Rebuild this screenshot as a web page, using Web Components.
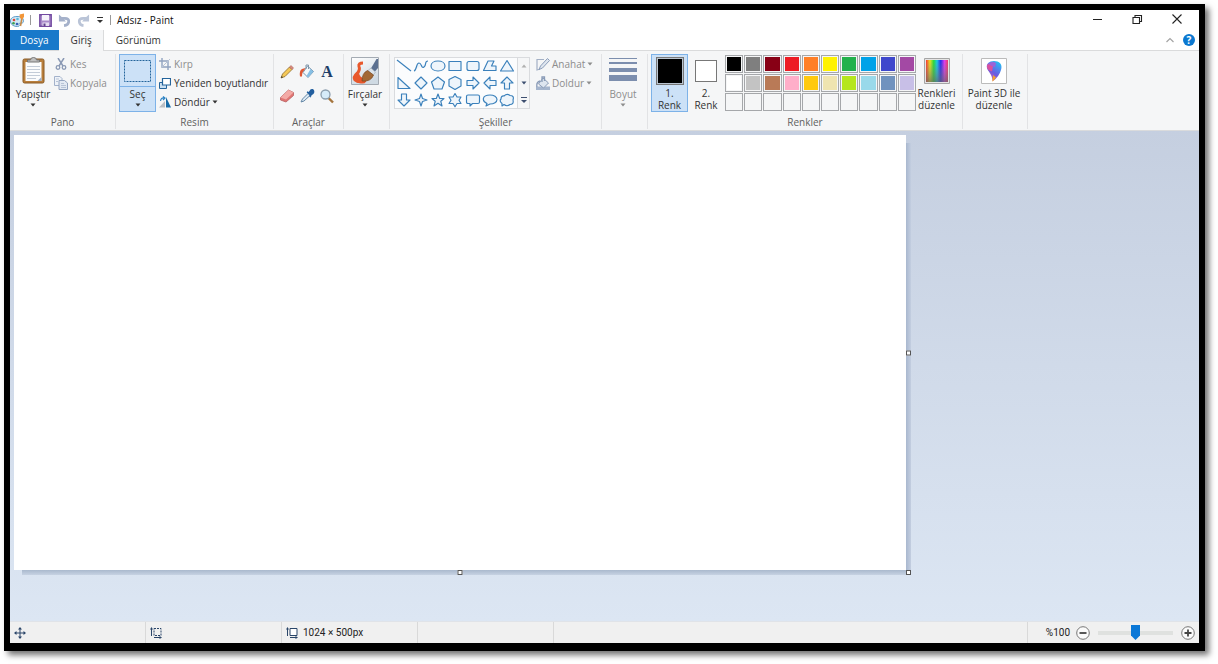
<!DOCTYPE html>
<html lang="tr">
<head>
<meta charset="utf-8">
<title>Adsız - Paint</title>
<style>
  body { margin: 0; background: #fff; }
</style>
</head>
<body>
<paint-window></paint-window>

<script>
const shape = (d) => `<svg viewBox="0 0 16 16"><path d="${d}" fill="#eef5fb" stroke="#3a80bb" stroke-width="1.15" stroke-linejoin="round"/></svg>`;
const shapes = {
  'Çizgi': 'M1 2 15 13',
  'Eğri': 'M1 13C4 12 3 5 6 5S8 11 11 9 11 3 15 3',
  'Oval': 'M8 3C12 3 15 5 15 8S12 13 8 13 1 11 1 8 4 3 8 3Z',
  'Dikdörtgen': 'M2 3.500H14V12.500H2Z',
  'Yuvarlatılmış dikdörtgen': 'M4 3.500H12Q14 3.500 14 5.500V10.500Q14 12.500 12 12.500H4Q2 12.500 2 10.500V5.500Q2 3.500 4 3.500Z',
  'Çokgen': 'M6 3H12L9.500 8H14V12.500H1.500Z',
  'Üçgen': 'M8 2.500 14.500 13H1.500Z',
  'Dik üçgen': 'M2 2.500V13.500H14Z',
  'Elmas': 'M8 2 14 8 8 14 2 8Z',
  'Beşgen': 'M8 2 14.500 7 12 14H4L1.500 7Z',
  'Altıgen': 'M8 1.500 14 4.500V11L8 14.500 2 11V4.500Z',
  'Sağ ok': 'M2 5.500H8V2L14 8 8 14V10.500H2Z',
  'Sol ok': 'M14 5.500H8V2L2 8 8 14V10.500H14Z',
  'Yukarı ok': 'M5.500 14V8H2L8 2 14 8H10.500V14Z',
  'Aşağı ok': 'M5.500 2V8H2L8 14 14 8H10.500V2Z',
  'Dört köşeli yıldız': 'M8 2 9.500 6.500 14 8 9.500 9.500 8 14 6.500 9.500 2 8 6.500 6.500Z',
  'Beş köşeli yıldız': 'M8 2 9.700 6.500H14L10.800 9.300 12 14 8 11.300 4 14 5.200 9.300 2 6.500H6.300Z',
  'Altı köşeli yıldız': 'M8 1.500 10 5H14L12 8.200 14 11.500H10L8 14.800 6 11.500H2L4 8.200 2 5H6Z',
  'Dikdörtgen belirtme': 'M3 3H13Q14.500 3 14.500 4.500V10Q14.500 11.500 13 11.500H7.500L5 14V11.500H3Q1.500 11.500 1.500 10V4.500Q1.500 3 3 3Z',
  'Oval belirtme': 'M8 3C12 3 15 5 15 7.500S12 12 8 12L4 14 5 11.500C-.5 9 0 3 8 3Z',
  'Bulut belirtme': 'M5 4Q8 1 11 3.500 15.500 3.500 14 8 15 12.500 11 12.500 8 15 5 12.500L3 14 3 11.500Q0 9 2 7 2 3.500 5 4Z'
};

const icons = {
  logo: `<svg viewBox="0 0 15 15"><path d="M7 3.500C2 3.500 0 6 .500 9S4 13.500 7.500 13.500 8 11 9 10.500 14 11 13.500 7.500 10 3.500 7 3.500Z" fill="#d2e8f6" stroke="#5c9cca"/><circle cx="4" cy="7" r="1.300" fill="#d64a37"/><circle cx="3.500" cy="10.300" r="1.300" fill="#3c9f52"/><circle cx="7" cy="11" r="1.300" fill="#365fb5"/><circle cx="7.500" cy="6" r="1.300" fill="#58b8da"/><path d="M12 5 10.500 13" stroke="#c78a48" stroke-width="1.500"/><path d="M9.500 1.500 14 .500V4L12 6.500 10 5Z" fill="#f29638"/></svg>`,
  save: `<svg viewBox="0 0 13 13"><path d="M.8.800H12.200V12.200H.8Z" fill="#a98bc9" stroke="#7249a0" stroke-width="1.400"/><path d="M3 1H10V6.500H3Z" fill="#f6f2fb"/><path d="M3.500 8.500H10V12H3.500Z" fill="#e6dcf0"/><path d="M4.500 9.500H6.500V12H4.500Z" fill="#60418c"/></svg>`,
  undo: `<svg viewBox="0 0 14 14"><path d="M3 4.800H7.500Q12 4.800 11.500 8.500 11 12 6.500 12.500" fill="none" stroke="#a5b1ca" stroke-width="3"/><path d="M1 .5V8H8.500L5.500 4.500Z" fill="#a5b1ca"/></svg>`,
  redo: `<svg viewBox="0 0 14 14"><path d="M11 4.800H6.500Q2 4.800 2.500 8.500 3 12 7 12.500" fill="none" stroke="#bac4d7" stroke-width="3"/><path d="M13 .5V8H5.500L8.500 4.500Z" fill="#bac4d7"/></svg>`,
  custom: `<svg viewBox="0 0 8 8"><path d="M1 1.500H7" stroke="#333"/><path d="M1 4H7L4 7Z" fill="#333"/></svg>`,
  minimize: `<svg viewBox="0 0 12 12"><path d="M2 5.500H11" stroke="#222"/></svg>`,
  restore: `<svg viewBox="0 0 12 12"><path d="M2 3.500H8.500V9.500H2ZM4 3.500V1.500H10.500V7.500H9" fill="none" stroke="#222" stroke-width="1.100"/></svg>`,
  close: `<svg viewBox="0 0 12 12"><path d="M1.500 .5 10.500 9.500M10.500 .5 1.500 9.500" stroke="#222" stroke-width="1.100"/></svg>`,
  chevron: `<svg viewBox="0 0 12 12"><path d="M2.500 8 6 4.500 9.500 8" fill="none" stroke="#a4a4a4" stroke-width="1.200"/></svg>`,
  paste: `<svg viewBox="0 0 24 30"><rect x="2" y="3" width="21" height="24" rx="1.500" fill="#b97f3c" stroke="#8a5b25"/><path d="M4.500 6H20.500V25H4.500Z" fill="#fbfcfd"/><path d="M6 10.500H19M6 13.500H19M6 16.500H19M6 19.500H19M6 22.500H15" stroke="#c3ccd8"/><path d="M16.500 25 20.500 21V25Z" fill="#9db0c8"/><path d="M6.500 6V4H9.500Q9.500 1.500 12.500 1.500T15.500 4H18.500V6Z" fill="#c0c0c0" stroke="#777"/></svg>`,
  cut: `<svg viewBox="0 0 12 12"><path d="M3 0 8 8M9 0 4 8" stroke="#8a99b4" stroke-width="1.500"/><circle cx="3" cy="9.500" r="1.800" fill="none" stroke="#8a99b4" stroke-width="1.300"/><circle cx="9" cy="9.500" r="1.800" fill="none" stroke="#8a99b4" stroke-width="1.300"/></svg>`,
  copy: `<svg viewBox="0 0 14 14"><path d="M.5.500H6L8 2.500V9.500H.5Z" fill="#eef2f8" stroke="#a3b2cb"/><path d="M5 4.500H10.500L13.500 7V13.500H5Z" fill="#e2e9f3" stroke="#94a5c1"/><path d="M2 3H5M2 5.500H4M7 7.500H10M7 9.500H12M7 11.500H12" stroke="#b7c3d6"/></svg>`,
  select: `<svg viewBox="0 0 27 22"><path d="M.5.500H26.500V21.500H.5Z" fill="none" stroke="#24649b" stroke-dasharray="2 1"/></svg>`,
  crop: `<svg viewBox="0 0 12 12"><path d="M3 0V9H12M0 3H9V12" fill="none" stroke="#91a3c0" stroke-width="1.400"/><path d="M2 10 11 1" stroke="#b8c3d5"/></svg>`,
  resize: `<svg viewBox="0 0 12 12"><path d="M3 5.500H.5V11.500H7.500V8" fill="#cbe0f2" stroke="#24649b"/><path d="M3.500 1.500H11.500V8H3.500Z" fill="#fff" stroke="#24649b" stroke-width="1.200"/></svg>`,
  rotate: `<svg viewBox="0 0 12 12"><path d="M7 1 12 11.500H7Z" fill="#176ba8"/><path d="M6 5V11.500H0Z" fill="#b9bec4"/><path d="M1.500 5Q2 1.500 5 2M4 .500 6 2 4 4" fill="none" stroke="#2d83c5" stroke-width="1.200"/></svg>`,
  pencil: `<svg viewBox="0 0 16 16"><path d="M2 14 3.500 10 10.500 3 13 5.500 6 12.500Z" fill="#f5c958" stroke="#8c6b2c" stroke-width=".8"/><path d="M10.500 3 12 1.500 14.500 4 13 5.500Z" fill="#dc8b7e" stroke="#a86055" stroke-width=".6"/><path d="M2 14 2.700 12 4 13.300Z" fill="#333"/></svg>`,
  bucket: `<svg viewBox="0 0 16 16"><path d="M8.500 2 14.500 7.500 9 13.500 4 8.500Z" fill="#f3f8fb" stroke="#7593ad"/><path d="M11.500 5 14.500 7.500 9 13.500 7.500 12Z" fill="#86bfe4"/><path d="M1 12.500Q0 6.500 3 5L6.500 4 5 6.500Q3 8 3 12.500Z" fill="#df5733"/><path d="M7 5V1H9.500V5" fill="none" stroke="#8096a9"/></svg>`,
  textmark: `<svg viewBox="0 0 16 16" overflow="visible"><text x="8" y="13" text-anchor="middle" font-family="Liberation Serif, serif" font-size="16" font-weight="700" fill="#1e3e68">A</text></svg>`,
  eraser: `<svg viewBox="0 0 16 16"><path d="M1.500 9.500 9.500 2 14.500 4.500V7.500L7 14 1.500 12Z" fill="#e07573" stroke="#b86061" stroke-width=".8"/><path d="M1.500 9.500 9.500 2 14.500 4.500 7 11.500Z" fill="#f3aaa6"/></svg>`,
  picker: `<svg viewBox="0 0 16 16"><path d="M2 14 3.500 11 9 5.500 11 7.500 5 13Z" fill="#dceaf5" stroke="#6487a6"/><path d="M8 4 10 5 12 2Q14 1 14.500 3T13 6L11 8 12 9" fill="#235f9f" stroke="#235f9f" stroke-width="1.500"/></svg>`,
  magnifier: `<svg viewBox="0 0 16 16"><path d="M9.500 10 14 14.500" stroke="#a5753e" stroke-width="2.400"/><circle cx="6.500" cy="6.500" r="4.500" fill="#d6ebf9" stroke="#8c9eae" stroke-width="1.300"/></svg>`,
  brush: `<svg viewBox="0 0 28 28"><defs><linearGradient id="b" y2="1" x2=".4"><stop stop-color="#fff"/><stop offset="1" stop-color="#cfdae3"/></linearGradient></defs><path d="M.5.500H27.500V27.500H.5Z" fill="url(#b)" stroke="#a4abb3"/><path d="M12 6Q7 6 8 9.500 9.500 13 6 16.500 2 20 4 23 7 26 14 24.500" fill="none" stroke="#e8582c" stroke-width="3"/><path d="M4 18Q2 26 9 26L15 25V21Q9 22 8 16Z" fill="#e8582c"/><path d="M19 13 25.500 2H27V11L22.500 16Z" fill="#5b7090"/><path d="M17 13.500 20 11 24.500 15 22 18.500Z" fill="#dce4eb" stroke="#9aa7b3" stroke-width=".6"/><path d="M11 24Q11 16 16.500 13.500L22.500 18Q20 25 11 24Z" fill="#a36935" stroke="#794820" stroke-width=".7"/></svg>`,
  outline: `<svg viewBox="0 0 14 14"><path d="M8 2.500H1V13L4 12" fill="none" stroke="#a3b0c5" stroke-width="1.200"/><path d="M3 12.500 4.500 9 11.500 1.500 13.500 3.500 6.500 11Z" fill="#dfe6ef" stroke="#8b9dba"/></svg>`,
  fill: `<svg viewBox="0 0 14 14"><path d="M0 10.500H14V14H0Z" fill="#a5b5cd"/><path d="M7 2 12.500 7 7.500 12 2.500 8Z" fill="#dde5ef" stroke="#899bb7"/><path d="M1 11Q0 6 4 5M6 6V1H8.500V5" fill="none" stroke="#899bb7" stroke-width="1.300"/></svg>`,
  size: `<svg viewBox="0 0 28 26"><path d="M0 0H28V1H0ZM0 4H28V6H0ZM0 10H28V14H0ZM0 17H28V23H0Z" fill="#7c8eae"/></svg>`,
  spectrum: `<svg viewBox="0 0 26 26"><defs><linearGradient id="h"><stop stop-color="#f33"/><stop offset=".18" stop-color="#e8e51f"/><stop offset=".35" stop-color="#24de38"/><stop offset=".5" stop-color="#17cbe8"/><stop offset=".67" stop-color="#2826f0"/><stop offset=".84" stop-color="#e13af0"/><stop offset="1" stop-color="#f13861"/></linearGradient><linearGradient id="v" x2="0" y2="1"><stop stop-color="#888" stop-opacity="0"/><stop offset="1" stop-color="#666" stop-opacity=".7"/></linearGradient></defs><path d="M.5.500H25.500V25.500H.5Z" fill="#e4e4e4" stroke="#a5a5a5"/><path d="M2 2H24V24H2Z" fill="url(#h)"/><path d="M2 2H24V24H2Z" fill="url(#v)"/></svg>`,
  paint3d: `<svg viewBox="0 0 26 26"><defs><linearGradient id="p" x1=".8" x2=".3" y2="1"><stop stop-color="#1fc4ee"/><stop offset=".3" stop-color="#4a8cf0"/><stop offset=".6" stop-color="#6a5ae0"/><stop offset=".8" stop-color="#a05fc8"/><stop offset="1" stop-color="#f2a32b"/></linearGradient></defs><path d="M.5.500H25.500V25.500H.5Z" fill="#fff" stroke="#bbb"/><path d="M13 3C8 3 5 6 6 10S11.500 16 11.500 23.500Q18 19 20 12C22 6 18 3 13 3Z" fill="url(#p)"/><path d="M6 7Q9 4 12 8.500L11 13.500 7.500 12Q5.500 10 6 7Z" fill="#d9519e"/><path d="M7 6Q11 2.500 15 5L14 9 11 8Z" fill="#9b63d8"/><path d="M12 17Q13.500 18 15 19.500L11.500 23.500Z" fill="#f5a32a"/></svg>`,
  move: `<svg viewBox="0 0 12 12"><path d="M6 1V11M1 6H11" stroke="#2a4568"/><path d="M6 0 8 2.500H4ZM6 12 4 9.500H8ZM0 6 2.500 4V8ZM12 6 9.500 8V4Z" fill="#2a4568"/></svg>`,
  selsize: `<svg viewBox="0 0 12 12"><path d="M4 1.500H11V8.500H4Z" fill="none" stroke="#2a4568" stroke-dasharray="2 1"/><path d="M1.500 1V9M4 10.500H11" stroke="#2a4568"/><path d="M1.500 0 3 2.500H0ZM12 10.500 9.500 9V12Z" fill="#2a4568"/></svg>`,
  imgsize: `<svg viewBox="0 0 12 12"><path d="M4 1.500H11V8.500H4Z" fill="#fff" stroke="#2a4568"/><path d="M1.500 1V9M4 10.500H11" stroke="#2a4568"/><path d="M1.500 0 3 2.500H0ZM12 10.500 9.500 9V12Z" fill="#2a4568"/></svg>`,
  minus: `<svg viewBox="0 0 14 14"><circle cx="7" cy="7" r="6.300" fill="#fafafa" stroke="#777"/><path d="M3.500 7H10.500" stroke="#444" stroke-width="1.800"/></svg>`,
  plus: `<svg viewBox="0 0 14 14"><circle cx="7" cy="7" r="6.300" fill="#fafafa" stroke="#777"/><path d="M3.500 7H10.500M7 3.500V10.500" stroke="#444" stroke-width="1.800"/></svg>`,
  up: `<svg viewBox="0 0 6 6"><path d="M.5 4.500H5.500L3 1.500Z" fill="#b0b0b0"/></svg>`,
  down: `<svg viewBox="0 0 6 6"><path d="M.5 1.500H5.500L3 4.500Z" fill="currentColor"/></svg>`,
  more: `<svg viewBox="0 0 8 8"><path d="M1 1.500H7" stroke="#3d4f70"/><path d="M1 4H7L4 7Z" fill="#3d4f70"/></svg>`
};

const BASE = `<style>
  *, *::before, *::after { box-sizing: border-box; }
  button { all: unset; box-sizing: border-box; cursor: default; }
  button:focus-visible { outline: 1px dotted #333; }
</style>`;

function define(name, html, setup) {
  const tpl = document.createElement('template');
  tpl.innerHTML = BASE + html;
  customElements.define(name, class extends HTMLElement {
    connectedCallback() {
      if (this.shadowRoot) return;
      const root = this.attachShadow({ mode: 'open' });
      root.append(tpl.content.cloneNode(true));
      if (setup) setup.call(this, root);
    }
  });
}

define('ui-icon', `<style>
  :host { display: block; flex: none; width: var(--w, 12px); height: var(--h, var(--w, 12px)); }
  svg { display: block; width: 100%; height: 100%; }
</style>`, function (root) {
  root.append(document.createRange().createContextualFragment(icons[this.getAttribute('name')]));
});

define('icon-button', `<style>
  :host { display: flex; }
  button { flex: 1; display: flex; align-items: center; justify-content: center; }
</style><button type="button"><slot></slot></button>`, function (root) {
  root.querySelector('button').setAttribute('aria-label', this.getAttribute('label'));
});

/* Large ribbon button: picture above, one or two caption lines, optional arrow */
define('big-button', `<style>
  :host { display: flex; flex: none; height: 58px; color: #333; }
  :host([muted]) { color: #8d8d8d; }
  button { flex: 1; display: flex; flex-direction: column; align-items: center; border: 1px solid transparent; text-align: center; }
  :host([active]) button { background: #cce1f7; border-color: #7db2e8; }
  .pic { height: 32px; align-self: stretch; display: flex; align-items: center; justify-content: center; }
  :host([split]) .pic { border-bottom: 1px solid #7db2e8; }
  .cap { line-height: 12px; padding-top: 1px; white-space: nowrap; }
  .arrow { display: none; padding-top: 2px; --w: 6px; }
  :host([menu]) .arrow { display: block; }
</style><button type="button"><span class="pic"><slot name="icon"></slot></span><span class="cap"><slot></slot></span><span class="arrow"><ui-icon name="down"></ui-icon></span></button>`,
function (root) { root.querySelector('button').disabled = this.hasAttribute('muted'); });

define('small-button', `<style>
  :host { display: flex; color: #333; }
  :host([muted]) { color: #8d8d8d; }
  button { display: flex; align-items: center; height: 19px; white-space: nowrap; }
  .pic { width: 14px; display: flex; justify-content: center; margin-right: 2px; }
  .arrow { display: none; --w: 6px; margin-left: 2px; }
  :host([menu]) .arrow { display: block; }
</style><button type="button"><span class="pic"></span><slot></slot><span class="arrow"><ui-icon name="down"></ui-icon></span></button>`,
function (root) {
  root.querySelector('button').disabled = this.hasAttribute('muted');
  const icon = document.createElement('ui-icon');
  icon.setAttribute('name', this.getAttribute('icon'));
  root.querySelector('.pic').append(icon);
});

define('ribbon-group', `<style>
  :host { display: flex; flex-direction: column; flex: none; border-right: 1px solid #e2e3e5; margin: 3px 0 1px; }
  .body { flex: 1; display: flex; align-items: flex-start; }
  .label { height: 14px; line-height: 14px; text-align: center; color: #5f5f5f; }
</style><div class="body"><slot></slot></div><div class="label"></div>`, function (root) {
  root.querySelector('.label').textContent = this.getAttribute('label') || '';
});

define('shape-gallery', `<style>
  :host { display: flex; width: 136px; height: 52px; border: 1px solid #d9dbde; background: #fbfcfd; }
  .grid { flex: 1; display: grid; grid-template-columns: repeat(7, 1fr); grid-template-rows: repeat(3, 1fr); margin-right: 1px; }
  .grid button { display: flex; align-items: center; justify-content: center; min-height: 0; }
  .grid svg { width: 16px; height: 16px; display: block; }
  .scroll { width: 12px; border-left: 1px solid #d9dbde; display: flex; flex-direction: column; background: #f5f6f7; color: #3d4f70; }
  icon-button { flex: 1; --w: 6px; }
  icon-button:last-child { --w: 8px; }
</style><div class="grid"></div><div class="scroll"><icon-button label="Yukarı"><ui-icon name="up"></ui-icon></icon-button><icon-button label="Aşağı"><ui-icon name="down"></ui-icon></icon-button><icon-button label="Tümü"><ui-icon name="more"></ui-icon></icon-button></div>`,
function (root) {
  root.querySelector('.grid').innerHTML = Object.entries(shapes).map(([n, d]) => `<button type="button" aria-label="${n}">${shape(d)}</button>`).join('');
});

define('color-palette', `<style>
  :host { display: grid; width: 191px; grid-template-columns: repeat(10, 1fr); grid-auto-rows: 18px; gap: 1px; }
  button { border: 1px solid #a5a7aa; padding: 1px; }
</style>`, function (root) {
  const colors = ['#000000','#7f7f7f','#880015','#ed1c24','#ff7f27','#fff200','#22b14c','#00a2e8','#3f48cc','#a349a4',
                  '#ffffff','#c3c3c3','#b97a57','#ffaec9','#ffc90e','#efe4b0','#b5e61d','#99d9ea','#7092be','#c8bfe7'];
  for (let i = 0; i < 30; i++) {
    const b = document.createElement('button');
    b.type = 'button';
    b.setAttribute('aria-label', colors[i] || 'Özel renk');
    const c = colors[i] || '#f5f6f7';
    b.style.background = `linear-gradient(${c}, ${c}) content-box, #f5f6f7`;
    root.append(b);
  }
});

define('title-bar', `<style>
  :host { display: flex; align-items: center; height: 20px; background: #fff; color: #111; }
  .quick { display: flex; align-items: center; flex: 1; }
  .sep { width: 1px; height: 10px; background: #999; }
  .quick icon-button { width: 19px; --w: 13px; }
  .quick .drop { --w: 8px; width: 14px; }
  .logo { --w: 15px; margin-right: 5px; }
  .logo + .sep { margin-right: 5px; }
  .drop + .sep { margin: 0 6px 0 3px; }
  .name { font-size: 10px; line-height: 20px; }
  .win { display: flex; gap: 28px; padding-right: 16px; }
</style>
<div class="quick"><ui-icon class="logo" name="logo"></ui-icon><span class="sep"></span>
<icon-button label="Kaydet"><ui-icon name="save"></ui-icon></icon-button><icon-button label="Geri al"><ui-icon name="undo"></ui-icon></icon-button><icon-button label="Yinele"><ui-icon name="redo"></ui-icon></icon-button><icon-button class="drop" label="Özelleştir"><ui-icon name="custom"></ui-icon></icon-button><span class="sep"></span><span class="name">Adsız - Paint</span></div>
<div class="win"><icon-button label="Simge durumuna küçült"><ui-icon name="minimize"></ui-icon></icon-button><icon-button label="Önceki boyut"><ui-icon name="restore"></ui-icon></icon-button><icon-button label="Kapat"><ui-icon name="close"></ui-icon></icon-button></div>`);

define('tab-strip', `<style>
  :host { display: flex; height: 20px; background: #fff; color: #333; }
  button { height: 20px; line-height: 20px; text-align: center; padding: 0 10px; }
  .file { background: #1979ca; color: #fff; }
  .on { background: #f5f6f7; border-right: 1px solid #dadbdc; height: 21px; padding: 0 11px 1px 12px; position: relative; }
  .tabs { flex: 1; display: flex; }
  .view { padding: 0 12px; }
  .end { display: flex; align-items: center; gap: 7px; padding-right: 4px; }
  .help { width: 12px; height: 12px; border-radius: 50%; background: #0b78d0; color: #fff; font-size: 10px; line-height: 12px; font-weight: 700; padding: 0; }
</style><div class="tabs" role="tablist"><button type="button" class="file">Dosya</button><button type="button" class="on" role="tab" aria-selected="true">Giriş</button><button type="button" class="view" role="tab">Görünüm</button></div>
<div class="end"><icon-button label="Şeridi daralt"><ui-icon name="chevron"></ui-icon></icon-button><button type="button" class="help" aria-label="Yardım">?</button></div>`);

define('paint-ribbon', `<style>
  :host { display: flex; height: 81px; background: #f5f6f7; border: 1px solid #dadbdc; border-width: 1px 0; }
  .col { display: flex; flex-direction: column; }
  .pano { width: 106px; }
  .pano big-button { width: 38px; margin: 0 2px 0 4px; }
  .resim { width: 158px; }
  .resim big-button { width: 37px; margin: 0 2px 0 3px; }
  .tools { width: 70px; }
  .toolgrid { display: grid; grid-template-columns: repeat(3, 20px); grid-auto-rows: 24px; padding: 6px 3px; --w: 16px; }
  .brushes, .size { width: 46px; }
  .brushes big-button, .size big-button { width: 42px; }
  .shapes { width: 212px; }
  shape-gallery { margin: 3px 6px 0 4px; }
  .colors { width: 315px; }
  .c1 { width: 37px; margin-left: 3px; }
  .c2 { width: 36px; }
  color-palette { margin: 1px 0 0 1px; }
  .edit { width: 41px; }
  .p3d { width: 65px; }
  .p3d big-button { width: 62px; }
  .sw { width: 28px; height: 28px; background: #000; border: 1px solid #777; box-shadow: inset 0 0 0 1px #b9c4d0; display: block; }
  .c2 .sw { width: 22px; height: 22px; background: #fff; box-shadow: none; }
</style>
<ribbon-group class="pano" label="Pano"><big-button menu><ui-icon slot="icon" name="paste" style="--w:24px;--h:30px"></ui-icon>Yapıştır</big-button>
<div class="col"><small-button icon="cut" muted>Kes</small-button><small-button icon="copy" muted style="--w:14px">Kopyala</small-button></div></ribbon-group>
<ribbon-group class="resim" label="Resim"><big-button active split menu><ui-icon slot="icon" name="select" style="--w:27px;--h:22px"></ui-icon>Seç</big-button>
<div class="col"><small-button icon="crop" muted>Kırp</small-button><small-button icon="resize">Yeniden boyutlandır</small-button><small-button icon="rotate" menu>Döndür</small-button></div></ribbon-group>
<ribbon-group class="tools" label="Araçlar"><div class="toolgrid"><icon-button label="Kalem"><ui-icon name="pencil"></ui-icon></icon-button><icon-button label="Renkle doldur"><ui-icon name="bucket"></ui-icon></icon-button><icon-button label="Metin"><ui-icon name="textmark"></ui-icon></icon-button><icon-button label="Silgi"><ui-icon name="eraser"></ui-icon></icon-button><icon-button label="Renk seçici"><ui-icon name="picker"></ui-icon></icon-button><icon-button label="Büyüteç"><ui-icon name="magnifier"></ui-icon></icon-button></div></ribbon-group>
<ribbon-group class="brushes"><big-button menu><ui-icon slot="icon" name="brush" style="--w:28px"></ui-icon>Fırçalar</big-button></ribbon-group>
<ribbon-group class="shapes" label="Şekiller"><shape-gallery></shape-gallery><div class="col"><small-button icon="outline" muted menu style="--w:14px">Anahat</small-button><small-button icon="fill" muted menu style="--w:14px">Doldur</small-button></div></ribbon-group>
<ribbon-group class="size"><big-button muted menu><ui-icon slot="icon" name="size" style="--w:28px;--h:26px"></ui-icon>Boyut</big-button></ribbon-group>
<ribbon-group class="colors" label="Renkler"><big-button class="c1" active><span slot="icon" class="sw"></span>1.<br>Renk</big-button><big-button class="c2"><span slot="icon" class="sw"></span>2.<br>Renk</big-button><color-palette></color-palette><big-button class="edit"><ui-icon slot="icon" name="spectrum" style="--w:26px"></ui-icon>Renkleri<br>düzenle</big-button></ribbon-group>
<ribbon-group class="p3d"><big-button><ui-icon slot="icon" name="paint3d" style="--w:26px"></ui-icon>Paint 3D ile<br>düzenle</big-button></ribbon-group>`);

define('paint-workspace', `<style>
  :host { display: block; flex: 1; min-height: 0; padding: 4px; background: linear-gradient(#c5cfe0, #dce6f3); overflow: hidden; container-type: inline-size; }
  .sheet { position: relative; width: calc(75cqw + 6px); aspect-ratio: 1024 / 500; background: #fff; }
  .sheet::before, .sheet::after { content: ""; position: absolute; }
  .sheet::before { top: 8px; bottom: -5px; left: 100%; width: 5px; background: linear-gradient(90deg, #a9b8cf, #c3cee0); }
  .sheet::after { left: 8px; right: 0; top: 100%; height: 5px; background: linear-gradient(#aab9cd, #c6d2e3); }
  i { position: absolute; z-index: 1; width: 5px; height: 5px; border: 1px solid #555; background: #fff; }
  .e { left: 100%; top: 50%; transform: translateY(-50%); }
  .s { left: 50%; top: 100%; transform: translateX(-50%); }
  .se { left: 100%; top: 100%; }
</style><div class="sheet"><i class="e"></i><i class="s"></i><i class="se"></i></div>`);

define('zoom-control', `<style>
  :host { display: flex; align-items: center; --w: 14px; }
  input { appearance: none; width: 75px; height: 16px; margin: 0 8px; background: linear-gradient(#dfe1df, #dfe1df) center / 100% 4px no-repeat; }
  input::-webkit-slider-thumb { appearance: none; width: 9px; height: 15px; background: #0b78d7; clip-path: polygon(0 0, 100% 0, 100% 70%, 50% 100%, 0 70%); }
  label { margin-right: 6px; }
</style><label for="z">%100</label><icon-button label="Uzaklaştır"><ui-icon name="minus"></ui-icon></icon-button><input id="z" type="range" min="0" max="100" value="50"><icon-button label="Yakınlaştır"><ui-icon name="plus"></ui-icon></icon-button>`);

define('status-bar', `<style>
  :host { display: flex; height: 22px; background: #f0f0f0; border-top: 1px solid #e0e3e8; font: 10px/20px Roboto, "Liberation Sans", sans-serif; color: #222; }
  .cell { width: 136px; display: flex; align-items: center; gap: 5px; padding-left: 4px; border-right: 1px solid #d9d9d9; }
  .cell:first-child { padding-left: 2px; }
  .rest { flex: 1; border-right: 1px solid #d9d9d9; }
  zoom-control { padding: 0 4px 0 18px; }
</style><div class="cell"><ui-icon name="move"></ui-icon></div><div class="cell"><ui-icon name="selsize"></ui-icon></div><div class="cell"><ui-icon name="imgsize"></ui-icon>1024 × 500px</div><div class="cell"></div><div class="rest"></div><zoom-control></zoom-control>`);

define('paint-window', `<style>
  :host { display: block; height: 100vh; padding: 4px 13px 13px 4px; box-sizing: border-box; font: 10px/14px "Open Sans", "Noto Sans", sans-serif; color: #333; }
  .frame { display: flex; flex-direction: column; height: 100%; border: 6px solid #000; border-bottom-width: 8px; box-shadow: 4px 4px 6px rgba(0, 0, 0, .55); }
</style><div class="frame"><title-bar></title-bar><tab-strip></tab-strip><paint-ribbon></paint-ribbon><paint-workspace></paint-workspace><status-bar></status-bar></div>`);
</script>
</body>
</html>
